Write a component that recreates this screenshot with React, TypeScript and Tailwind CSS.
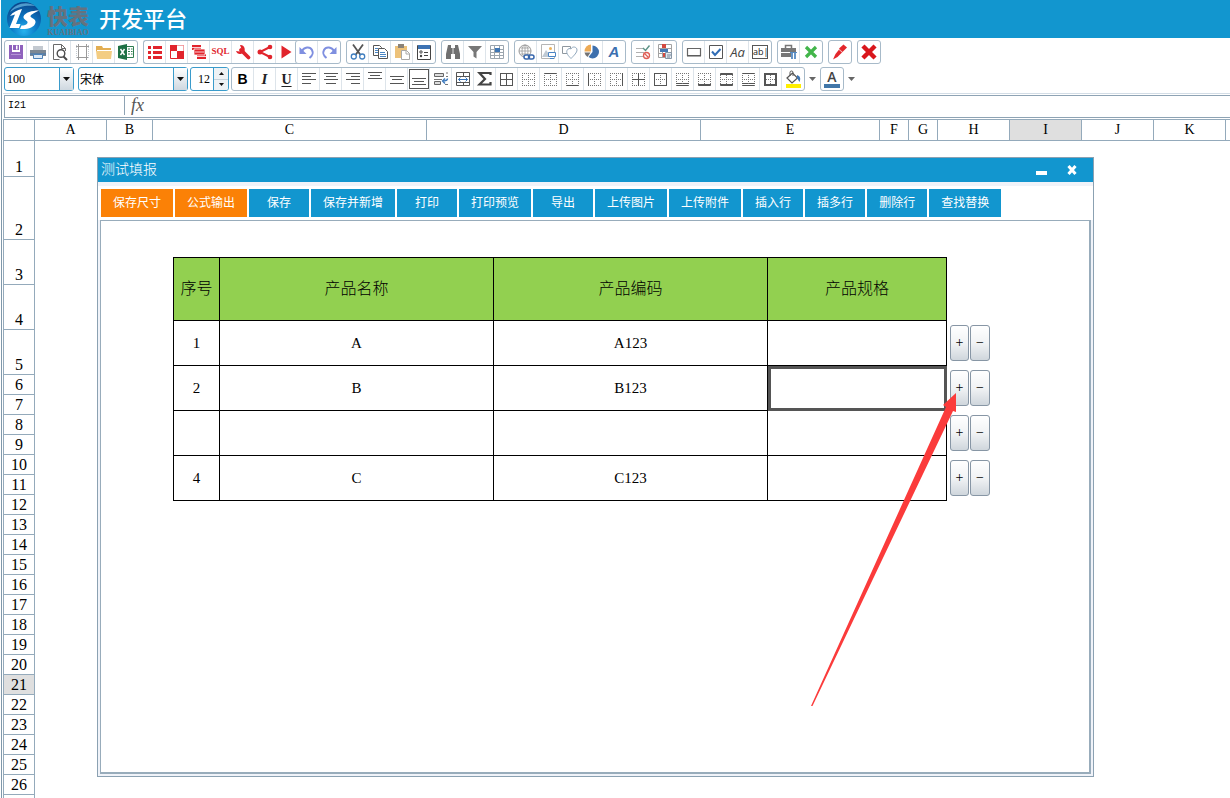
import React from "react";

type IconDef = { name: string; art: React.ReactNode };

const Svg = ({ children, size = 18 }: { children: React.ReactNode; size?: number }) => (
  <svg width={size} height={size} viewBox="0 0 18 18" fill="none" aria-hidden="true" className="shrink-0">
    {children}
  </svg>
);

const RED = "#e1242c";

const fileIcons: IconDef[] = [
  {
    name: "保存",
    art: (
      <Svg>
        <path d="M2 2h3v7h8V2h3v14H2z" fill="#8f62bd" />
        <path d="M6 2h6v5H6z" fill="#8f62bd" />
        <path d="M9 2.500h1.500v4H9z" fill="#fff" />
        <path d="M4 11.500h10" stroke="#b493d6" />
      </Svg>
    ),
  },
  {
    name: "打印",
    art: (
      <Svg>
        <path d="M4 3h10v4H4z" fill="#c3c9d0" />
        <path d="M1 7h16v6H1z" fill="#7c8894" />
        <path d="M1 10h16v2H1z" fill="#5c7fa4" />
        <path d="M4.500 11.500h9v4h-9z" fill="#dce9f6" stroke="#4d82b8" />
      </Svg>
    ),
  },
  {
    name: "预览",
    art: (
      <Svg>
        <path d="M14.500 8V5.500l-4-4h-8v15h6" stroke="#6a6a6a" />
        <path d="M10.500 1.500v4h4" stroke="#6a6a6a" />
        <circle cx="10" cy="10.500" r="3.800" stroke="#4c4c4c" strokeWidth="1.400" fill="#fff" />
        <path d="M12.500 13.500l3.500 3.500" stroke="#4c4c4c" strokeWidth="2" />
      </Svg>
    ),
  },
  {
    name: "页面设置",
    art: (
      <Svg>
        <path d="M5.500 1v16M13.500 1v16M3 3.500h13M3 14.500h13" stroke="#9a9a9a" />
        <path d="M6 4h7v10H6z" fill="#fff" />
        <path d="M3.500 2v14M15.500 2v14" stroke="#c4cbd2" strokeDasharray="1 1" />
      </Svg>
    ),
  },
  {
    name: "打开",
    art: (
      <Svg>
        <path d="M1 3h6l1 2h8v3H1z" fill="#e2ae53" />
        <path d="M1 8h16l-1 8H2z" fill="#f3cd83" />
        <path d="M2 7.500h14" stroke="#fff" />
      </Svg>
    ),
  },
  {
    name: "Excel",
    art: (
      <Svg>
        <path d="M10 3.500h6.500v11H10" stroke="#2c7d4f" fill="#fff" />
        <path d="M11 6h2M14 6h1.500M11 8.500h2M14 8.500h1.500M11 11h2M14 11h1.500" stroke="#2c7d4f" />
        <path d="M1 3l9-2v16l-9-2z" fill="#1e7145" />
        <path d="M3.500 6l4 6M7.500 6l-4 6" stroke="#fff" strokeWidth="1.400" />
      </Svg>
    ),
  },
];

const dataIcons: IconDef[] = [
  {
    name: "列表",
    art: (
      <Svg>
        <path d="M2 3h3v3H2zM7 3h9v3H7zM2 8h3v3H2zM7 8h9v3H7zM2 13h3v3H2zM7 13h9v3H7z" fill={RED} />
      </Svg>
    ),
  },
  {
    name: "交叉表",
    art: (
      <Svg>
        <path d="M2.500 2.500h13v13h-13z" fill="#fff" stroke={RED} />
        <path d="M2 2h7v6H2zM9 8h7v8H9z" fill={RED} />
        <path d="M9 2.500h6.500V8" stroke="#f3a5a8" />
      </Svg>
    ),
  },
  {
    name: "数据集",
    art: (
      <Svg>
        <path d="M2 2h9v5H2zM7 11h9v5H7z" fill={RED} />
        <path d="M4 6h11v6H4z" fill={RED} stroke="#fff" strokeWidth=".8" />
        <path d="M2 4.500h9M5 9h9M7 13.500h9" stroke="#fff" strokeWidth=".8" />
      </Svg>
    ),
  },
  {
    name: "SQL",
    art: <span className="font-['Liberation_Serif',serif] text-[9px] font-bold text-[#e1242c]">SQL</span>,
  },
  {
    name: "工具",
    art: (
      <Svg>
        <path d="M7 7l7.500 7.500" stroke={RED} strokeWidth="3.800" strokeLinecap="round" />
        <path d="M6 2a4.500 4.500 0 1 1-4 6l3.500.5L7.500 6z" fill={RED} />
      </Svg>
    ),
  },
  {
    name: "分享",
    art: (
      <Svg>
        <path d="M14 4L4 9l10 5" stroke={RED} strokeWidth="2" />
        <circle cx="4" cy="9" r="2.500" fill={RED} />
        <circle cx="14" cy="4" r="2.300" fill={RED} />
        <circle cx="14" cy="14" r="2.300" fill={RED} />
      </Svg>
    ),
  },
  {
    name: "运行",
    art: (
      <Svg>
        <path d="M3.500 2.500v13L13.500 9z" fill={RED} />
      </Svg>
    ),
  },
];

const historyIcons: IconDef[] = [
  {
    name: "撤销",
    art: (
      <Svg>
        <path d="M4 8c2-4 8-5 10-1s0 6-2.500 8" stroke="#7f8fe0" strokeWidth="2" />
        <path d="M1.500 4v7h7z" fill="#7f8fe0" />
      </Svg>
    ),
  },
  {
    name: "重做",
    art: (
      <Svg>
        <path d="M14 8c-2-4-8-5-10-1s0 6 2.500 8" stroke="#7f8fe0" strokeWidth="2" />
        <path d="M16.500 4v7h-7z" fill="#7f8fe0" />
      </Svg>
    ),
  },
];

const clipIcons: IconDef[] = [
  {
    name: "剪切",
    art: (
      <Svg>
        <path d="M4 1.500l7.500 10.500M14 1.500L6.500 12" stroke="#555" strokeWidth="1.800" />
        <circle cx="4.800" cy="13.500" r="2.500" stroke="#3f7ebf" strokeWidth="1.300" />
        <circle cx="13.200" cy="13.500" r="2.500" stroke="#3f7ebf" strokeWidth="1.300" />
      </Svg>
    ),
  },
  {
    name: "复制",
    art: (
      <Svg>
        <path d="M2.500 2.500h6l2 2v8h-8z" fill="#fff" stroke="#555" />
        <path d="M7.500 5.500h6l3 3v7h-9z" fill="#fff" stroke="#555" />
        <path d="M4 5.500h3M4 7.500h3M4 9.500h3M9 9.500h5M9 11.500h6M9 13.500h6" stroke="#4a86c4" />
      </Svg>
    ),
  },
  {
    name: "粘贴",
    art: (
      <Svg>
        <path d="M2 3h12v12H2z" fill="#edc27a" />
        <path d="M5 1h6v4H5z" fill="#8b8378" />
        <path d="M8.500 7.500h5l3 3v6h-8z" fill="#fff" stroke="#a8a8a8" />
        <path d="M13 7.500v3.500h3.500" stroke="#a8a8a8" />
      </Svg>
    ),
  },
  {
    name: "属性",
    art: (
      <Svg>
        <path d="M2.500 2.500h13v14h-13z" stroke="#444" fill="#fff" />
        <path d="M3 2h12v4H3z" fill="#3c73b4" />
        <circle cx="6" cy="9" r="1.200" stroke="#444" />
        <circle cx="6" cy="13" r="1.200" fill="#444" />
        <path d="M9 9.500h4M9 12.500h4" stroke="#444" />
      </Svg>
    ),
  },
];

const findIcons: IconDef[] = [
  {
    name: "查找",
    art: (
      <Svg>
        <path d="M4 2h3v3h4V2h3l2 9v5h-5v-5H7v5H2v-5z" fill="#707070" />
        <path d="M9 5v6" stroke="#fff" strokeWidth=".8" />
      </Svg>
    ),
  },
  {
    name: "筛选",
    art: (
      <Svg>
        <path d="M2 3h14l-5.500 6v6.500l-3-2V9z" fill="#777" />
      </Svg>
    ),
  },
  {
    name: "冻结",
    art: (
      <Svg>
        <path d="M2.500 2.500h13v13h-13zM2 6.500h14M2 9.500h14M2 12.500h14M6.500 2v14M11.500 2v14" stroke="#9ba5ae" />
        <path d="M7 5h5v4H7z" fill="#3e76b5" />
      </Svg>
    ),
  },
];

const insertIcons: IconDef[] = [
  {
    name: "超链接",
    art: (
      <Svg>
        <circle cx="8" cy="8" r="6" stroke="#9a9a9a" />
        <path d="M2 8h12M8 2v12M3.500 5h9M3.500 11h9" stroke="#9a9a9a" strokeWidth=".8" />
        <ellipse cx="8" cy="8" rx="3" ry="6" stroke="#9a9a9a" strokeWidth=".8" />
        <rect x="7" y="12" width="5.500" height="4" rx="2" stroke="#3767ad" strokeWidth="1.500" fill="#fff" />
        <rect x="11.500" y="12" width="5.500" height="4" rx="2" stroke="#3767ad" strokeWidth="1.500" />
      </Svg>
    ),
  },
  {
    name: "图片",
    art: (
      <Svg>
        <path d="M2.500 1.500h13v14h-13z" stroke="#b5b5b5" fill="#fff" />
        <circle cx="11.500" cy="5.500" r="1.500" fill="#edb35b" />
        <path d="M3 14l4-7 3 4v3z" fill="#c0cad4" />
        <path d="M9.500 9.500h7v4h-7z" fill="#fff" stroke="#4a84c4" />
        <path d="M11 15.500h4" stroke="#4a84c4" />
      </Svg>
    ),
  },
  {
    name: "形状",
    art: (
      <Svg>
        <path d="M1.500 3.500h8v7h-8z" stroke="#8f989f" />
        <path d="M10 6c1-3 6-2.500 6 1 0 2.500-3 5.500-6 8.500-3-3-5-5.500-4-8 .8-2 3-2.500 4-1.500z" stroke="#91a8bd" fill="#fff" />
      </Svg>
    ),
  },
  {
    name: "图表",
    art: (
      <Svg>
        <path d="M9.500 2.500a6.500 6.500 0 0 1 0 13 7 7 0 0 1-4-1.500l4-5z" fill="#3e70ad" />
        <path d="M8 1.500v7H1.500a6.500 7 0 0 1 6.500-7z" fill="#edaa55" />
        <path d="M1.500 9.500h6L4.500 14a7 7 0 0 1-3-4.500z" fill="#737373" />
      </Svg>
    ),
  },
  {
    name: "艺术字",
    art: (
      <span className="font-['Liberation_Sans',sans-serif] text-[15px] leading-4 font-bold text-[#3c70b0] italic">A</span>
    ),
  },
];

const checkIcons: IconDef[] = [
  {
    name: "校验",
    art: (
      <Svg>
        <path d="M2 5.500h8M2 9.500h8M2 13.500h7" stroke="#b0b0b0" />
        <path d="M9 5l2.500 2.500L15.500 2.500" stroke="#5b9286" strokeWidth="1.400" />
        <circle cx="12.500" cy="12.500" r="3" stroke="#df5d54" strokeWidth="1.300" />
        <path d="M10.500 10.500l4 4" stroke="#df5d54" strokeWidth="1.300" />
      </Svg>
    ),
  },
  {
    name: "条件格式",
    art: (
      <Svg>
        <path d="M2.500 1.500h13v13h-13zM2 5.500h14M2 10.500h14M6.500 1v14" stroke="#a2a2a2" />
        <path d="M6 1h4v4H6zM7 10h3v4H7z" fill="#d4493f" />
        <path d="M4 6h8v3H4z" fill="#4478b4" />
        <path d="M9.500 9.500h6v6h-6z" fill="#e4eaf1" stroke="#8495a5" />
        <path d="M11 12h4M11 14h3" stroke="#718397" />
      </Svg>
    ),
  },
];

const controlIcons: IconDef[] = [
  {
    name: "按钮控件",
    art: (
      <Svg>
        <path d="M2.500 5.500h13v7h-13z" stroke="#666" strokeWidth="1.200" />
        <path d="M2 13h14" stroke="#555" />
      </Svg>
    ),
  },
  {
    name: "复选框",
    art: (
      <Svg>
        <path d="M2.500 2.500h13v13h-13z" stroke="#555" />
        <path d="M5 8.500l3 3.500 5.500-6" stroke="#2f6cb5" strokeWidth="2" />
      </Svg>
    ),
  },
  {
    name: "标签",
    art: <span className="font-['Open_Sans',sans-serif] text-[13px] leading-4 text-[#444] italic">Aa</span>,
  },
  {
    name: "文本框",
    art: (
      <span className="w-4 border border-[#555] text-center font-['Open_Sans',sans-serif] text-[9px] leading-3 text-[#222]">
        ab|
      </span>
    ),
  },
];

const toolIcons: IconDef[] = [
  {
    name: "工具箱",
    art: (
      <Svg>
        <path d="M5.500 5V2.500h6V5" stroke="#777" strokeWidth="1.500" />
        <path d="M1 5h15v4H1zM1 10h10v4H1z" fill="#777" />
        <path d="M12 9v7M15 9v7" stroke="#568bc3" strokeWidth="1.800" />
        <path d="M10 9.500h7" stroke="#568bc3" />
      </Svg>
    ),
  },
  {
    name: "清除",
    art: (
      <Svg>
        <path d="M4 4l10 10M14 4L4 14" stroke="#42b54a" strokeWidth="3.200" />
      </Svg>
    ),
  },
];

const penIcons: IconDef[] = [
  {
    name: "画笔",
    art: (
      <Svg>
        <path d="M8 5.500L12.500 1.500l3.500 3-4.500 4.500z" fill="#e3262b" />
        <path d="M8.500 6l3 3-5 5-4.500 2.500L4.500 11z" fill="#e3262b" />
        <path d="M8 6.500l3.500 3" stroke="#fff" strokeWidth=".7" />
      </Svg>
    ),
  },
];

const closeIcons: IconDef[] = [
  {
    name: "关闭",
    art: (
      <Svg>
        <path d="M4.500 4.500l9 9M13.500 4.500l-9 9" stroke="#d9161c" strokeWidth="4.400" strokeLinecap="square" />
      </Svg>
    ),
  },
];

type Edge = "none" | "thin" | "thick" | "double";

function BorderArt({
  top = "none",
  bottom = "none",
  left = "none",
  right = "none",
  inner = false,
}: {
  top?: Edge;
  bottom?: Edge;
  left?: Edge;
  right?: Edge;
  inner?: boolean;
}) {
  const line = (edge: Edge, d: string, thick: string) => (
    <>
      <path
        d={d}
        stroke={edge === "none" ? "#777" : "#555"}
        strokeDasharray={edge === "none" ? "1 1" : undefined}
      />
      {edge === "thick" && <path d={thick} stroke="#555" />}
    </>
  );
  return (
    <svg width="15" height="15" viewBox="0 0 15 15" fill="none" shapeRendering="crispEdges" aria-hidden="true">
      {line(top, "M1 1.500h13", "M1 2.500h13")}
      {line(bottom, "M1 13.500h13", "M1 12.500h13")}
      {line(left, "M1.500 1v13", "M2.500 1v13")}
      {line(right, "M13.500 1v13", "M12.500 1v13")}
      {bottom === "double" && <path d="M1 11.500h13" stroke="#555" />}
      <path d="M3 7.500h9M7.500 3v9" stroke={inner ? "#555" : "#777"} strokeDasharray={inner ? undefined : "1 1"} />
      {inner && <path d="M1 7.500h13M7.500 1v13" stroke="#555" />}
    </svg>
  );
}

const Lines = ({ d }: { d: string }) => (
  <Svg>
    <path d={d} stroke="#555" shapeRendering="crispEdges" />
  </Svg>
);

const formatIcons: IconDef[] = [
  { name: "加粗", art: <span className="font-['Liberation_Sans',sans-serif] text-[14px] font-bold text-black">B</span> },
  { name: "斜体", art: <span className="font-['Liberation_Serif',serif] text-[15px] font-bold text-[#222] italic">I</span> },
  {
    name: "下划线",
    art: <span className="font-['Liberation_Serif',serif] text-[14px] font-bold text-[#222] underline underline-offset-2">U</span>,
  },
  { name: "左对齐", art: <Lines d="M2 3.500h14M2 6.500h9M2 9.500h14M2 13.500h9" /> },
  { name: "居中", art: <Lines d="M2 3.500h14M4 6.500h10M2 9.500h14M4 13.500h10" /> },
  { name: "右对齐", art: <Lines d="M2 3.500h14M7 6.500h9M2 9.500h14M7 13.500h9" /> },
  { name: "顶端对齐", art: <Lines d="M2 2.500h14M4 5.500h10M2 8.500h14" /> },
  { name: "垂直居中", art: <Lines d="M2 6.500h14M4 9.500h10M2 13.500h14" /> },
  {
    name: "底端对齐",
    art: (
      <span className="flex h-5 w-5 items-center justify-center border border-[#555]">
        <Lines d="M2 8.500h14M4 11.500h10M2 14.500h14" />
      </span>
    ),
  },
  {
    name: "自动换行",
    art: (
      <Svg>
        <path d="M2.500 3.500h9v3h-9zM2.500 11.500h6v3h-6z" stroke="#666" fill="#ddd" />
        <path d="M2 9.500h8M14 3h2M14 6.500h2M13 14.500h3" stroke="#777" />
        <path d="M15.500 8.500c0 2-2 2.500-5 2.500M13 8.500L10.500 11l2.500 2.500" stroke="#3e7abd" strokeWidth="1.400" />
      </Svg>
    ),
  },
  {
    name: "合并单元格",
    art: (
      <Svg>
        <path d="M2.500 2.500h13v13h-13zM2 6.500h14M2 12.500h14M9.500 2v4M9.500 13v3" stroke="#555" />
        <path d="M4.500 9.500h9M6.500 7.500l-2 2 2 2M11.500 7.500l2 2-2 2" stroke="#3573ba" />
      </Svg>
    ),
  },
  {
    name: "求和",
    art: (
      <Svg>
        <path d="M14.500 5V3h-11L9 9l-5.500 5.500h11v-2.500" stroke="#444" strokeWidth="2.200" />
      </Svg>
    ),
  },
  { name: "所有框线", art: <BorderArt top="thin" bottom="thin" left="thin" right="thin" inner /> },
  { name: "无框线", art: <BorderArt /> },
  { name: "上框线", art: <BorderArt top="thin" /> },
  { name: "下框线", art: <BorderArt bottom="thin" /> },
  { name: "左框线", art: <BorderArt left="thin" /> },
  { name: "右框线", art: <BorderArt right="thin" /> },
  { name: "内部框线", art: <BorderArt inner /> },
  { name: "外侧框线", art: <BorderArt top="thin" bottom="thin" left="thin" right="thin" /> },
  { name: "双底框线", art: <BorderArt bottom="double" /> },
  { name: "粗底框线", art: <BorderArt bottom="thick" /> },
  { name: "上下粗框线", art: <BorderArt top="thick" bottom="thick" /> },
  { name: "上框线和双下框线", art: <BorderArt top="thin" bottom="double" /> },
  { name: "粗匣框线", art: <BorderArt top="thick" bottom="thick" left="thick" right="thick" /> },
  {
    name: "填充颜色",
    art: (
      <Svg>
        <path d="M3 8l5.500-5 5 5-5.500 5z" fill="#fff" stroke="#555" strokeWidth="1.200" />
        <path d="M6 6V2.500a1.500 1.500 0 0 1 3 0V6" stroke="#555" />
        <path d="M13 5c3 1 4 3 2.500 7L13 8z" fill="#3e74b0" />
        <path d="M2 14h15v4H2z" fill="#ffef00" />
      </Svg>
    ),
  },
];

function ToolGroup({ icons, label, open = false }: { icons: IconDef[]; label: string; open?: boolean }) {
  return (
    <div
      role="group"
      aria-label={label}
      className={
        open
          ? "-mr-2 flex h-6 divide-x divide-[#dde4ea] rounded-l-[3px] border border-r-0 border-[#a7bac9]"
          : "flex h-6 divide-x divide-[#dde4ea] rounded-[3px] border border-[#a7bac9] bg-white"
      }
    >
      {icons.map((icon) => (
        <button
          key={icon.name}
          type="button"
          aria-label={icon.name}
          className="flex w-[22px] items-center justify-center overflow-hidden whitespace-nowrap"
        >
          {icon.art}
        </button>
      ))}
    </div>
  );
}

const Caret = ({ tone = "#111" }: { tone?: string }) => (
  <svg width="7" height="4" viewBox="0 0 7 4" aria-hidden="true">
    <path d="M0 0h7L3.500 4z" fill={tone} />
  </svg>
);

function Logo() {
  return (
    <svg width="36" height="36" viewBox="0 0 36 36" aria-hidden="true" className="shrink-0">
      <defs>
        <radialGradient id="ball" cx="0.500" cy="0.850" r="0.850">
          <stop offset="0" stopColor="#27b4ee" />
          <stop offset="0.450" stopColor="#0b79c6" />
          <stop offset="1" stopColor="#0a4388" />
        </radialGradient>
      </defs>
      <circle cx="19" cy="18" r="17" fill="url(#ball)" />
      <path d="M5 11C10 2 23 0 30 5 22 4 13 5 5 11z" fill="#7fd0f4" opacity=".6" />
      <path d="M17 8l-6 15h4.500l-1.500 4H4.500L10 13.500 5 15c3-4 7-6 12-7z" fill="#fff" />
      <path
        d="M34 9.500c-7 0-14 2-15.500 6-.8 3 5 4 4 6.500-.9 2-3.500 2.500-6 2.500L15 28c8 .5 14.500-1.500 15.500-6.500.8-4-5.500-4.500-5-6.500.4-1.500 4.500-3.500 8.500-5.500z"
        fill="#fff"
      />
    </svg>
  );
}

const columns = [
  { label: "A", cls: "w-[72px] shrink-0" },
  { label: "B", cls: "w-[46px] shrink-0" },
  { label: "C", cls: "w-[274px] shrink-0" },
  { label: "D", cls: "w-[274px] shrink-0" },
  { label: "E", cls: "w-[179px] shrink-0" },
  { label: "F", cls: "w-[29px] shrink-0" },
  { label: "G", cls: "w-[29px] shrink-0" },
  { label: "H", cls: "w-[72px] shrink-0" },
  { label: "I", cls: "w-[72px] shrink-0 bg-[#dfdfdf]" },
  { label: "J", cls: "w-[72px] shrink-0" },
  { label: "K", cls: "w-[72px] shrink-0" },
];

const rowHeight = (n: number) => {
  if (n === 1) return "h-9";
  if (n === 2) return "h-[63px]";
  if (n <= 5) return "h-[45px]";
  return "h-5";
};

const actions = [
  "保存尺寸", "公式输出", "保存", "保存并新增", "打印", "打印预览", "导出",
  "上传图片", "上传附件", "插入行", "插多行", "删除行", "查找替换",
];

const products = [
  { no: "1", name: "A", code: "A123" },
  { no: "2", name: "B", code: "B123" },
  { no: "", name: "", code: "" },
  { no: "4", name: "C", code: "C123" },
];

const TH = "border border-black bg-[#92d050] px-0 pt-0 pb-1 font-light";
const TD = "border border-black p-0 text-center";
const STEP =
  "h-9 rounded-[3px] border border-[#8796a5] bg-linear-to-b from-white via-[#f1f3f5] to-[#cfd6dc] p-0 font-['Liberation_Serif',serif] text-[14px] leading-none text-black";

export default function App() {
  return (
    <div className="flex h-screen flex-col overflow-hidden bg-white pl-px font-['Liberation_Serif','Noto_Sans_CJK_SC',sans-serif] text-black">
      <header className="flex h-[38px] shrink-0 items-center bg-[#1296cf] pl-1">
        <Logo />
        <div className="flex w-[54px] flex-col items-center font-['Noto_Sans_CJK_SC',sans-serif] text-[#65727f]">
          <span className="text-[21px] leading-7 font-black">快表</span>
          <span className="font-['Liberation_Serif',serif] text-[8px] leading-2 font-bold">KUAIBIAO</span>
        </div>
        <h1 className="pb-1 pl-1 font-['Noto_Sans_CJK_SC',sans-serif] text-[22px] leading-8 font-medium text-white">
          开发平台
        </h1>
      </header>

      <div className="flex min-h-0 flex-1 flex-col border-l border-[#8098aa] pl-px">
        <div className="flex shrink-0 gap-[5px] pt-[2px] pl-px">
          <ToolGroup icons={fileIcons} label="文件" />
          <ToolGroup icons={dataIcons} label="数据" open />
          <ToolGroup icons={historyIcons} label="历史" />
          <ToolGroup icons={clipIcons} label="剪贴板" />
          <ToolGroup icons={findIcons} label="查找" />
          <ToolGroup icons={insertIcons} label="插入" />
          <ToolGroup icons={checkIcons} label="校验" />
          <ToolGroup icons={controlIcons} label="控件" />
          <ToolGroup icons={toolIcons} label="工具" />
          <ToolGroup icons={penIcons} label="画笔" />
          <ToolGroup icons={closeIcons} label="关闭" />
        </div>

        <div className="flex shrink-0 border-b border-[#d3dde6] pt-[3px] pb-[2px] pl-px">
          <div className="mr-1 flex h-6 w-[70px] rounded-[3px] border border-[#3a9bcb]">
            <select aria-label="缩放" className="w-[54px] appearance-none pl-[2px] text-[12px] outline-none">
              <option>100</option>
            </select>
            <span className="pointer-events-none flex flex-1 items-center justify-center border-l border-[#3a9bcb] bg-linear-to-b from-white to-[#cfd8e0]">
              <Caret />
            </span>
          </div>
          <div className="mr-[2px] flex h-6 w-[110px] rounded-[3px] border border-[#3a9bcb]">
            <select
              aria-label="字体"
              className="w-[94px] appearance-none pl-px font-['Noto_Sans_CJK_SC',sans-serif] text-[12px] outline-none"
            >
              <option>宋体</option>
            </select>
            <span className="pointer-events-none flex flex-1 items-center justify-center border-l border-[#3a9bcb] bg-linear-to-b from-white to-[#cfd8e0]">
              <Caret />
            </span>
          </div>
          <div className="mr-[2px] flex h-6 w-[39px] overflow-hidden rounded-[3px] border border-[#3a9bcb]">
            <input
              aria-label="字号"
              defaultValue="12"
              className="w-[22px] min-w-0 pr-[3px] text-right text-[12px] outline-none"
            />
            <div className="flex flex-1 flex-col border-l border-[#3a9bcb] bg-[#eef2f5]">
              <button type="button" aria-label="增大" className="flex flex-1 items-center justify-center">
                <svg width="5" height="3" viewBox="0 0 5 3" aria-hidden="true"><path d="M0 3h5L2.500 0z" fill="#111" /></svg>
              </button>
              <button type="button" aria-label="减小" className="flex flex-1 items-center justify-center border-t border-[#c5d2dc]">
                <svg width="5" height="3" viewBox="0 0 5 3" aria-hidden="true"><path d="M0 0h5L2.500 3z" fill="#111" /></svg>
              </button>
            </div>
          </div>
          <ToolGroup icons={formatIcons} label="格式" />
          <button type="button" aria-label="更多填充颜色" className="flex w-[15px] items-center justify-center">
            <Caret tone="#666" />
          </button>
          <ToolGroup
            label="字体颜色"
            icons={[
              {
                name: "字体颜色",
                art: (
                  <span className="flex w-4 flex-col items-center font-['Open_Sans',sans-serif] text-[14px] leading-[14px] font-semibold text-[#444]">
                    A
                    <span className="h-1 w-4 bg-[#4277a8]" />
                  </span>
                ),
              },
            ]}
          />
          <button type="button" aria-label="更多字体颜色" className="flex w-[15px] items-center justify-center">
            <Caret tone="#666" />
          </button>
        </div>

        <div className="ml-px flex shrink-0 pt-px">
          <div className="flex h-[23px] flex-1 border border-r-0 border-[#8ea3b4]">
            <input
              aria-label="名称框"
              defaultValue="I21"
              className="h-[19px] w-[120px] border-r border-[#8ea3b4] pl-[3px] font-['Liberation_Mono',monospace] text-[10px] outline-none"
            />
            <label htmlFor="formula" className="w-[25px] text-center text-[18px] leading-[19px] text-[#555] italic">
              fx
            </label>
            <input id="formula" className="min-w-0 flex-1 px-1 text-[12px] outline-none" />
          </div>
        </div>

        <div className="mt-px flex min-h-0 flex-1 flex-col border-t border-l border-[#94aabb]">
          <div className="flex h-[21px] shrink-0 overflow-hidden border-b border-[#94aabb] text-center text-[14px] leading-5">
            <div className="w-[31px] shrink-0 border-r border-[#94aabb]" />
            {columns.map((c) => (
              <div key={c.label} className={`border-r border-[#94aabb] ${c.cls}`}>
                {c.label}
              </div>
            ))}
          </div>

          <div className="flex min-h-0 flex-1">
            <div className="w-[31px] shrink-0 overflow-hidden border-r border-[#94aabb]">
              {Array.from({ length: 26 }, (_, i) => i + 1).map((n) => (
                <div
                  key={n}
                  className={`flex items-end justify-center border-b border-[#94aabb] text-[16px] leading-[19px] ${rowHeight(n)} ${
                    n === 21 ? "bg-[#dfdfdf]" : ""
                  }`}
                >
                  {n}
                </div>
              ))}
            </div>

            <section
              aria-label="测试填报"
              className="mt-4 mr-[136px] mb-[21px] ml-[62px] flex min-w-0 flex-1 flex-col border border-[#8ba1b2] bg-[#f0f3f9]"
            >
              <div className="flex h-6 shrink-0 items-center bg-[#1296cf] pl-[3px] text-white">
                <h2 className="flex-1 pb-1 font-['Noto_Sans_CJK_SC',sans-serif] text-[14px] leading-5 font-light">测试填报</h2>
                <button type="button" aria-label="最小化" className="mr-5 flex h-4 w-[11px] items-end pb-[3px]">
                  <span className="h-1 w-[11px] bg-white" />
                </button>
                <button type="button" aria-label="关闭" className="mr-4">
                  <svg width="10" height="10" viewBox="0 0 10 10" aria-hidden="true">
                    <path d="M1.500 1l7 8M8.500 1l-7 8" stroke="#fff" strokeWidth="3" />
                  </svg>
                </button>
              </div>

              <div className="mt-1 flex shrink-0 gap-[2px] bg-white p-[3px]">
                {actions.map((a, i) => (
                  <button
                    key={a}
                    type="button"
                    className={`h-7 min-w-[60px] px-3 pb-[2px] font-['Noto_Sans_CJK_SC',sans-serif] text-[12px] whitespace-nowrap text-white ${
                      i < 2 ? "bg-[#fb8106]" : "bg-[#1296cf]"
                    }`}
                  >
                    {a}
                  </button>
                ))}
              </div>

              <div className="relative mr-[2px] mb-[2px] ml-[2px] min-h-0 flex-1 border border-r-2 border-b-2 border-[#98acbb] bg-white pt-9 pl-[72px]">
                <table className="table-fixed border-collapse text-[15px]">
                  <colgroup>
                    <col className="w-[46px]" />
                    <col className="w-[274px]" />
                    <col className="w-[274px]" />
                    <col className="w-[179px]" />
                    <col className="w-[46px]" />
                  </colgroup>
                  <thead>
                    <tr className="h-[63px] font-['Noto_Sans_CJK_SC',sans-serif] text-[16px]">
                      <th className={TH}>序号</th>
                      <th className={TH}>产品名称</th>
                      <th className={TH}>产品编码</th>
                      <th className={TH}>产品规格</th>
                    </tr>
                  </thead>
                  <tbody>
                    {products.map((p, i) => (
                      <tr key={i} className="h-[45px]">
                        <td className={TD}>{p.no}</td>
                        <td className={TD}>{p.name}</td>
                        <td className={TD}>{p.code}</td>
                        <td className={`${TD} ${i === 1 ? "outline-3 -outline-offset-3 outline-[#555]" : ""}`} />
                        <td className="p-0">
                          <div className="flex gap-px pl-[3px]">
                            <button type="button" aria-label="插入行" className={`w-[19px] ${STEP}`}>+</button>
                            <button type="button" aria-label="删除行" className={`w-5 ${STEP}`}>−</button>
                          </div>
                        </td>
                      </tr>
                    ))}
                  </tbody>
                </table>
                <svg
                  width="150"
                  height="318"
                  viewBox="0 0 150 318"
                  aria-hidden="true"
                  className="pointer-events-none absolute top-[170px] left-[710px]"
                >
                  <path d="M0 315L135 16l-3-2L145 2v19l-3-1L1.500 315z" fill="#fb3b3b" />
                </svg>
              </div>
            </section>
          </div>
        </div>
      </div>
    </div>
  );
}
